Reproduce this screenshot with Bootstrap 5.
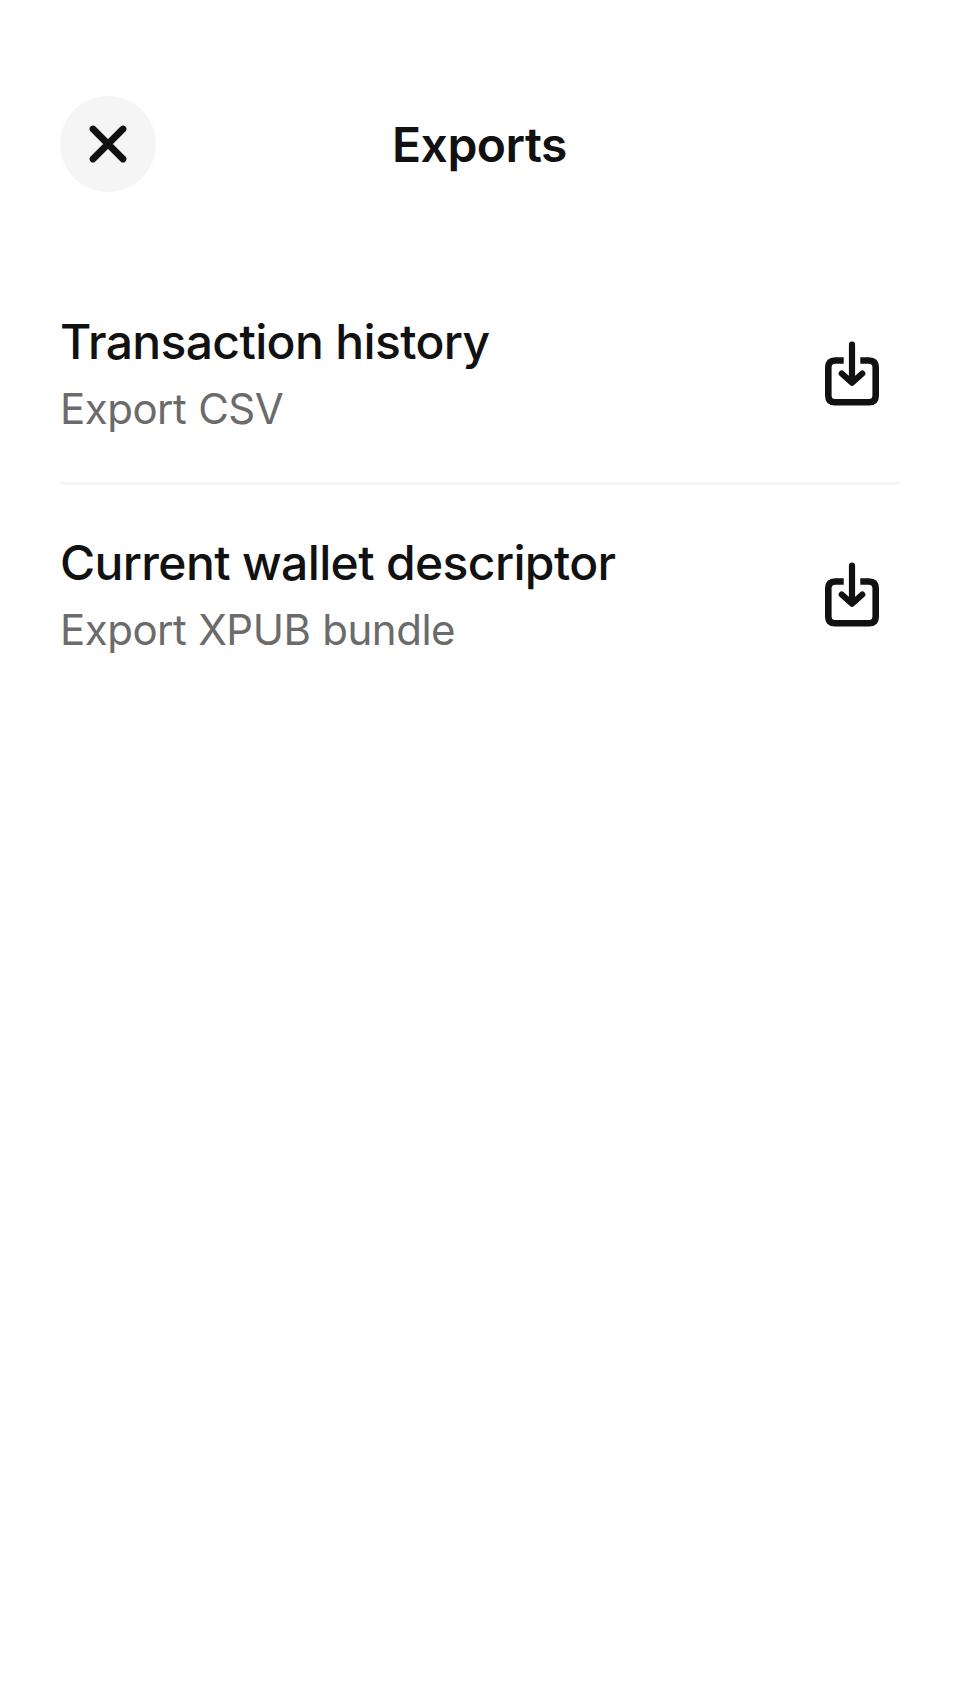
<!DOCTYPE html>
<html lang="en"><head><meta charset="utf-8"><meta name="viewport" content="width=device-width, initial-scale=1"><title>Exports</title>
<link rel="stylesheet" href="https://cdn.jsdelivr.net/npm/bootstrap@5.3.0/dist/css/bootstrap.min.css">
<style>
body{font-family:Inter,sans-serif;color:#111;background:#fff}
.screen{min-height:1704px;padding:96px 60px 0}
.topbar{height:96px}
.close-btn{width:96px;height:96px;background:#f5f5f5;color:#111;left:0;top:0}
.page-title{font-size:48px;font-weight:600;line-height:71px;letter-spacing:-.5px;padding:1px 1px 0 0}
.export-list{margin-top:72px}
.export-item{height:221px;padding-right:12px;border-bottom:3px solid #f5f5f5}
.export-item:last-child{border-bottom-color:transparent}
.item-text{align-self:flex-start;padding-top:42px}
.item-name{font-size:48px;font-weight:500;line-height:71px;letter-spacing:-.64px}
.item-note{font-size:42px;line-height:63px;letter-spacing:-.5px;word-spacing:.6px;color:#6b6b6b}
</style></head><body>
<svg class="d-none" aria-hidden="true"><symbol id="export-icon" viewBox="0 0 72 72"><g fill="none" stroke="currentColor" stroke-width="6.6"><path d="M27.7 23.5H19.1Q12.3 23.5 12.3 30.3V58.4Q12.3 65.2 19.1 65.2H52.9Q59.7 65.2 59.7 58.4V30.3Q59.7 23.5 52.9 23.5H44.3"/><path d="M36 7.7V45.4M25.7 36.5 36 45.8 46.3 36.5" stroke-width="6.2" stroke-linecap="round" stroke-linejoin="round"/></g></symbol></svg>
<main class="screen">
<header class="topbar position-relative d-flex align-items-center justify-content-center">
<button class="close-btn btn rounded-circle border-0 p-0 position-absolute d-flex align-items-center justify-content-center" aria-label="Close"><svg width="40" height="40" viewBox="0 0 40 40" fill="none" stroke="currentColor" stroke-width="6.8" stroke-linecap="round"><path d="M5 5 35 35M35 5 5 35"/></svg></button>
<h1 class="page-title m-0">Exports</h1>
</header>
<div class="export-list">
<div class="export-item d-flex align-items-center justify-content-between"><div class="item-text"><div class="item-name">Transaction history</div><div class="item-note">Export CSV</div></div><svg width="72" height="72" aria-hidden="true"><use href="#export-icon"/></svg></div>
<div class="export-item d-flex align-items-center justify-content-between"><div class="item-text"><div class="item-name">Current wallet descriptor</div><div class="item-note">Export XPUB bundle</div></div><svg width="72" height="72" aria-hidden="true"><use href="#export-icon"/></svg></div>
</div></main>
<script src="https://cdn.jsdelivr.net/npm/bootstrap@5.3.0/dist/js/bootstrap.bundle.min.js"></script>
</body></html>
